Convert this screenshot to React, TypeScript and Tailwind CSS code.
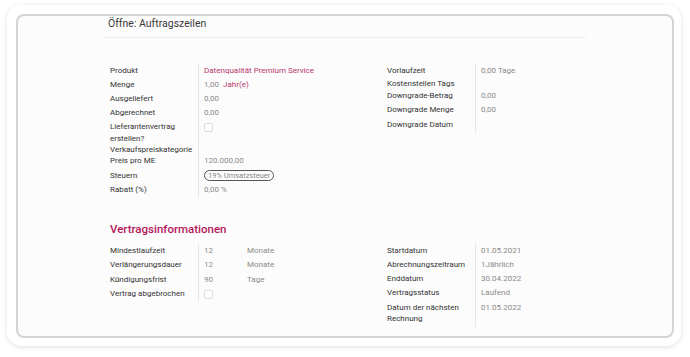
import React from "react";

type Row = { label: React.ReactNode; value?: React.ReactNode; unit?: string; h: string };

const muted = "text-[#8a8a8a]";

function Checkbox() {
  return <div className="mt-[3px] h-[9px] w-[9px] rounded-[2px] border border-[#dcdcdc] bg-white"></div>;
}

function Group({ rows, unitCol }: { rows: Row[]; unitCol?: boolean }) {
  return (
    <div className="flex">
      <div className="w-[89px] shrink-0 border-r border-[#e6e6e6] text-[#333]">
        {rows.map((r, i) => (
          <div key={i} className={r.h}>
            {r.label}
          </div>
        ))}
      </div>
      <div className={`pl-[5px] ${muted}`}>
        {rows.map((r, i) => (
          <div key={i} className={`${r.h} flex`}>
            <div className={unitCol ? "w-[43px]" : ""}>{r.value}</div>
            {r.unit && <div>{r.unit}</div>}
          </div>
        ))}
      </div>
    </div>
  );
}

export default function App() {
  const topLeft: Row[] = [
    { label: "Produkt", value: <span className="text-[#b8366b]">Datenqualität Premium Service</span>, h: "h-[14px]" },
    {
      label: "Menge",
      value: (
        <span>
          1,00 <span className="ml-[2px] text-[#b8366b]">Jahr(e)</span>
        </span>
      ),
      h: "h-[14px]",
    },
    { label: "Ausgeliefert", value: "0,00", h: "h-[14px]" },
    { label: "Abgerechnet", value: "0,00", h: "h-[14px]" },
    {
      label: (
        <span className="block leading-[12px] pt-[1px]">
          Lieferantenvertrag
          <br />
          erstellen?
        </span>
      ),
      value: <Checkbox />,
      h: "h-[23px]",
    },
    { label: "Verkaufspreiskategorie", h: "h-[11px]" },
    { label: "Preis pro ME", value: "120.000,00", h: "h-[14.5px]" },
    {
      label: "Steuern",
      value: (
        <span className="inline-block rounded-full border border-[#555] px-[3px] leading-[9px] text-[7.5px] text-[#888]">
          19% Umsatzsteuer
        </span>
      ),
      h: "h-[14.5px]",
    },
    { label: "Rabatt (%)", value: "0,00 %", h: "h-[14px]" },
  ];

  const topRight: Row[] = [
    { label: "Vorlaufzeit", value: "0,00 Tage", h: "h-[13px]" },
    { label: "Kostenstellen Tags", h: "h-[12px]" },
    { label: "Downgrade-Betrag", value: "0,00", h: "h-[14px]" },
    { label: "Downgrade Menge", value: "0,00", h: "h-[14.5px]" },
    { label: "Downgrade Datum", h: "h-[14px]" },
  ];

  const bottomLeft: Row[] = [
    { label: "Mindestlaufzeit", value: "12", unit: "Monate", h: "h-[14px]" },
    { label: "Verlängerungsdauer", value: "12", unit: "Monate", h: "h-[14.5px]" },
    { label: "Kündigungsfrist", value: "90", unit: "Tage", h: "h-[14.5px]" },
    { label: "Vertrag abgebrochen", value: <Checkbox />, h: "h-[14px]" },
  ];

  const bottomRight: Row[] = [
    { label: "Startdatum", value: "01.05.2021", h: "h-[14px]" },
    { label: "Abrechnungszeitraum", value: "1Jährlich", h: "h-[14px]" },
    { label: "Enddatum", value: "30.04.2022", h: "h-[14px]" },
    { label: "Vertragsstatus", value: "Laufend", h: "h-[14.5px]" },
    {
      label: (
        <span className="block leading-[11px] pt-[1px]">
          Datum der nächsten
          <br />
          Rechnung
        </span>
      ),
      value: "01.05.2022",
      h: "h-[26px]",
    },
  ];

  return (
    <div className="h-[357px] w-[690px] bg-white pl-[7px] pt-[5px] font-['Roboto',sans-serif]">
      <div className="h-[341px] w-[674px] rounded-[14px] bg-white p-[9px] shadow-[0_1px_5px_rgba(0,0,0,0.13)]">
        <div className="h-[324px] w-[658px] rounded-[8px] border-2 border-[#d4d4d4] bg-[#fcfcfc]">
          <div className="ml-[87px] w-[481px]">
            <div className="border-b border-[#ececec] pl-[3px] pt-[1px] pb-[6px] text-[10.5px] leading-[14px] text-[#3a3a3a]">
              Öffne: Auftragszeilen
            </div>
            <div className="mt-[26px] flex pl-[5px] text-[8px] leading-[14px]">
              <div className="w-[277px]">
                <Group rows={topLeft} />
              </div>
              <div>
                <Group rows={topRight} />
              </div>
            </div>
            <div className="mt-[24px] pl-[5px] text-[11.5px] font-medium leading-[16px] text-[#b3175a]">
              Vertragsinformationen
            </div>
            <div className="mt-[7px] flex pl-[5px] text-[8px] leading-[14px]">
              <div className="w-[277px]">
                <Group rows={bottomLeft} unitCol />
              </div>
              <div>
                <Group rows={bottomRight} />
              </div>
            </div>
          </div>
        </div>
      </div>
    </div>
  );
}
